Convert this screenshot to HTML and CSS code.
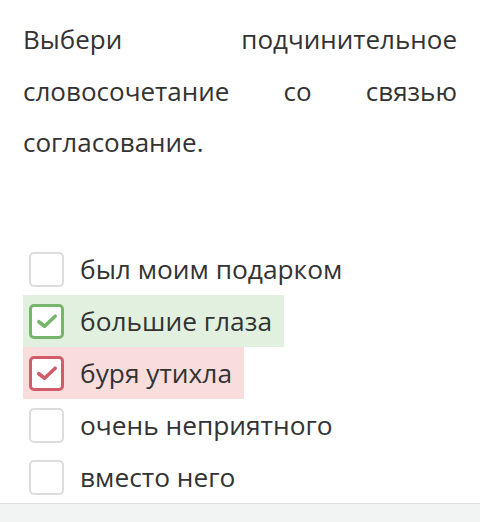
FILE: index.html
```html
<!DOCTYPE html>
<html lang="ru">
<head>
<meta charset="utf-8">
<link rel="stylesheet" href="styles.css">
</head>
<body>
<div class="page">
  <p class="question">Выбери подчинительное словосочетание со связью согласование.</p>
  <ul class="options">
    <li class="option">
      <span class="box"></span>
      <span class="label">был моим подарком</span>
    </li>
    <li class="option correct">
      <span class="box"><svg viewBox="0 0 20 20" width="24" height="24"><path d="M3.2 10.6 L8 14.4 L16.8 6" fill="none" stroke="currentColor" stroke-width="3" stroke-linecap="round" stroke-linejoin="round"/></svg></span>
      <span class="label">большие глаза</span>
    </li>
    <li class="option wrong">
      <span class="box"><svg viewBox="0 0 20 20" width="24" height="24"><path d="M3.2 10.6 L8 14.4 L16.8 6" fill="none" stroke="currentColor" stroke-width="3" stroke-linecap="round" stroke-linejoin="round"/></svg></span>
      <span class="label">буря утихла</span>
    </li>
    <li class="option">
      <span class="box"></span>
      <span class="label">очень неприятного</span>
    </li>
    <li class="option">
      <span class="box"></span>
      <span class="label">вместо него</span>
    </li>
  </ul>
</div>
<div class="footer"></div>
</body>
</html>
```

FILE: styles.css
```css
html, body {
  margin: 0;
  padding: 0;
  background: #fff;
}
body {
  font-family: "Open Sans", "Noto Sans", sans-serif;
  color: #333;
}
.page {
  padding: 14px 23px 0 23px;
}
.question {
  margin: 0;
  font-size: 26px;
  line-height: 51.5px;
  text-align: justify;
}
.options {
  list-style: none;
  margin: 74.5px 0 0 0;
  padding: 0;
  display: flex;
  flex-direction: column;
  align-items: flex-start;
}
.option {
  display: flex;
  align-items: center;
  height: 52px;
  padding: 0 12px 0 6px;
  font-size: 26.3px;
}
.box {
  box-sizing: border-box;
  width: 35px;
  height: 35px;
  border: 2px solid #dcdcdc;
  border-radius: 5px;
  background: #fff;
  display: flex;
  align-items: center;
  justify-content: center;
  margin-right: 16px;
  flex: none;
}
.correct {
  background: #e2f1df;
}
.correct .box {
  border: 3px solid #78b56c;
  color: #78b56c;
}
.wrong {
  background: #f9dcdc;
}
.wrong .box {
  border: 3px solid #d05d68;
  color: #d05d68;
}
.footer {
  position: absolute;
  left: 0;
  right: 0;
  top: 503px;
  height: 19px;
  background: #f2f4f4;
  border-top: 1.5px solid #dcdede;
}
```
